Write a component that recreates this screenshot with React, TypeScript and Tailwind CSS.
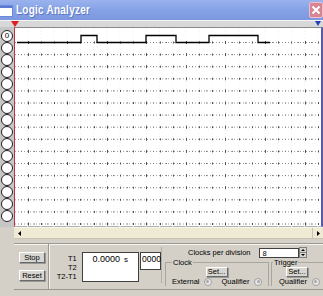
import React from "react";

const ROWS = 16;

function Plot() {
  const W = 306;
  const H = 199;
  const rowsY = Array.from({ length: ROWS }, (_, i) => 14 + i * 12.1);
  const ticks: number[] = [];
  for (let x = 12.5; x < W; x += 13.2) ticks.push(x);
  const minor: number[] = [];
  for (let x = 5.9; x < W; x += 13.2) minor.push(x);
  return (
    <svg width={W} height={H} viewBox={`0 0 ${W} ${H}`} className="block">
      {ticks.map((x, i) => (
        <line key={"v" + i} x1={x} y1={0} x2={x} y2={H} stroke="#f0f0f0" strokeWidth={1} strokeDasharray="1 2" />
      ))}
      {rowsY.map((y, r) => (
        <g key={r}>
          <line x1={0} y1={y + 0.5} x2={W} y2={y + 0.5} stroke="#9a9a9a" strokeWidth={1} strokeDasharray="1 2" />
          {ticks.map((x, i) => (
            <rect key={i} x={Math.round(x)} y={i % 3 === 0 ? y - 1 : y - 0.5} width={1} height={i % 3 === 0 ? 3 : 2} fill="#505050" />
          ))}
          {minor.map((x, i) => (
            <rect key={"m" + i} x={Math.round(x)} y={y} width={1} height={1} fill="#707070" />
          ))}
        </g>
      ))}
      <polyline
        points="2,14.5 66,14.5 66,7.5 82,7.5 82,14.5 131,14.5 131,7.5 161,7.5 161,14.5 194,14.5 194,7.5 243,7.5 243,14.5 255,14.5"
        fill="none"
        stroke="#000"
        strokeWidth={1.3}
      />
    </svg>
  );
}

function Btn({ children, className = "" }: { children: React.ReactNode; className?: string }) {
  return (
    <div
      className={
        "flex items-center justify-center bg-[#d8d6d0] border border-t-white border-l-white border-b-[#6a6a6a] border-r-[#6a6a6a] shadow-[1px_1px_0_#9a9a9a] text-[7.5px] leading-none text-black " +
        className
      }
    >
      {children}
    </div>
  );
}

function Radio() {
  return (
    <div className="w-[8px] h-[8px] rounded-full border border-[#a0a0a0] bg-[#e8e8e8] flex items-center justify-center">
      <div className="w-[3px] h-[3px] rounded-full bg-[#a8a8a8]" />
    </div>
  );
}

export default function App() {
  return (
    <div className="w-[323px] h-[296px] bg-[#d4d0c8] flex flex-col overflow-hidden font-['Liberation_Sans',Arial,sans-serif] text-black">
      {/* Title bar */}
      <div className="h-[20px] flex items-center bg-gradient-to-b from-[#9ab3ee] via-[#86a2e6] to-[#7c97de] shrink-0">
        <div className="w-[12px] h-[10px] bg-white border-t-[2px] border-[#5c7ad0] ml-0 mt-[1px] shadow-[0_0_0_1px_#6c88d8]" />
        <div className="ml-[4px] inline-block origin-left scale-x-[0.8] text-white font-bold text-[12.5px] leading-none tracking-[0.3px] [text-shadow:1px_1px_0_#5a74c0] whitespace-nowrap">
          Logic Analyzer
        </div>
        <div className="ml-auto mr-0 w-[14px] h-[16px] bg-[#d88494] border border-[#f0c0c8] rounded-[2px] flex items-center justify-center">
          <svg width="10" height="10" viewBox="0 0 10 10">
            <path d="M1.5 1.5 L8.5 8.5 M8.5 1.5 L1.5 8.5" stroke="#fff" strokeWidth={2} />
          </svg>
        </div>
      </div>
      {/* marker strip */}
      <div className="h-[7px] bg-[#d8d8d8] border-t border-[#f4f4f4] flex items-end shrink-0">
        <svg width="8" height="6" viewBox="0 0 8 6" className="ml-[11px]">
          <path d="M0 0 H8 L4 6 Z" fill="#e02020" />
        </svg>
        <svg width="6" height="5" viewBox="0 0 6 5" className="ml-auto mr-[2px] mb-[1px]">
          <path d="M0 0 H6 L3 5 Z" fill="#2040c0" />
        </svg>
      </div>
      {/* main area */}
      <div className="h-[200px] flex shrink-0">
        <div className="w-[15px] bg-[#c6c6c6] flex flex-col pt-[3px] pl-[1px]">
          {Array.from({ length: ROWS }, (_, i) => (
            <div
              key={i}
              className="w-[12px] h-[12px] rounded-full border border-[#202020] bg-white flex items-center justify-center text-[8px] leading-none"
            >
              {i === 0 ? "0" : ""}
            </div>
          ))}
        </div>
        <div className="flex-1 bg-white border-t border-t-[#8a8a8a] border-l border-l-[#c03040] border-r-2 border-r-[#5a5aa8] border-b border-b-[#b0b0b0]">
          <Plot />
        </div>
      </div>
      {/* scrollbar */}
      <div className="h-[12px] flex shrink-0">
        <div className="w-[14px] bg-[#d4d0c8]" />
        <div className="flex-1 flex bg-[#eeead4] border-t border-[#f8f6ec] border-b border-b-[#c8c4b0]">
          <div className="w-[11px] flex items-center justify-center">
            <svg width="3" height="5" viewBox="0 0 3 5">
              <path d="M3 0 V5 L0 2.5 Z" fill="#000" />
            </svg>
          </div>
          <div className="flex-1" />
          <div className="w-[11px] flex items-center justify-center border-l border-[#c8c4b0]">
            <svg width="3" height="5" viewBox="0 0 3 5">
              <path d="M0 0 V5 L3 2.5 Z" fill="#000" />
            </svg>
          </div>
        </div>
      </div>
      {/* bottom panel */}
      <div className="h-[4px] shrink-0" />
      <div className="ml-[14px] h-[47px] flex border-t border-[#9a9890] shadow-[inset_0_1px_0_#f4f4f0] border-b border-b-[#9a9890] shrink-0">
        {/* stop/reset */}
        <div className="w-[35px] flex flex-col pt-[8px] pl-[5px] gap-[7px] border-r border-[#9a9890] shadow-[1px_0_0_#f4f4f0]">
          <Btn className="w-[26px] h-[11px]">Stop</Btn>
          <Btn className="w-[26px] h-[11px]">Reset</Btn>
        </div>
        {/* times */}
        <div className="w-[112px] flex pt-[8px]">
          <div className="w-[24px] ml-[4px] flex flex-col items-end text-[7.5px] leading-[9px] pt-[2px]">
            <span>T1</span>
            <span>T2</span>
            <span>T2-T1</span>
          </div>
          <div className="ml-[5px] w-[58px] h-[30px] bg-white border border-[#404040] flex justify-center pt-[2px] text-[9px] leading-none">
            <span>0.0000</span>
            <span className="ml-[4px] text-[8px] mt-[1px]">s</span>
          </div>
          <div className="ml-[1px] w-[21px] h-[18px] bg-white border border-[#404040] text-[8.5px] leading-none pt-[2px] pl-[1px]">
            0000
          </div>
        </div>
        {/* clocks */}
        <div className="flex-1 flex flex-col border-l border-[#b0aea8] mt-[3px] mb-[6px]">
          <div className="flex items-center h-[11px]">
            <span className="ml-[26px] text-[7.5px] leading-none">Clocks per division</span>
            <div className="ml-[8px] w-[40px] h-[10px] bg-white border border-[#404040] text-[7.5px] leading-none pl-[3px] pt-[1px]">8</div>
            <div className="w-[8px] h-[11px] flex flex-col">
              <div className="flex-1 bg-[#d8d6d0] border border-[#808080] flex items-center justify-center">
                <svg width="4" height="2" viewBox="0 0 4 2"><path d="M0 2 H4 L2 0 Z" fill="#000" /></svg>
              </div>
              <div className="flex-1 bg-[#d8d6d0] border border-[#808080] border-t-0 flex items-center justify-center">
                <svg width="4" height="2" viewBox="0 0 4 2"><path d="M0 0 H4 L2 2 Z" fill="#000" /></svg>
              </div>
            </div>
          </div>
          <div className="flex flex-1 mt-[1px]">
            <fieldset className="ml-[3px] w-[104px] border border-b-0 border-[#a8a6a0] px-[6px] pt-0 min-w-0">
              <legend className="ml-[0px] px-[1px] text-[7.5px] leading-none">Clock</legend>
              <div className="flex justify-center mt-[0px]">
                <Btn className="w-[22px] h-[10px] ml-[-1px]">Set...</Btn>
              </div>
              <div className="flex items-center mt-[1px] text-[7.5px] leading-none">
                <span className="ml-[0px]">External</span>
                <div className="ml-[4px]"><Radio /></div>
                <span className="ml-[10px]">Qualifier</span>
                <div className="ml-[5px]"><Radio /></div>
              </div>
            </fieldset>
            <fieldset className="ml-[2px] flex-1 border border-b-0 border-r-0 border-[#a8a6a0] pl-[7px] pt-0 min-w-0">
              <legend className="ml-[-6px] px-[1px] text-[7.5px] leading-none">Trigger</legend>
              <div className="flex mt-[0px] pl-[7px]">
                <Btn className="w-[22px] h-[10px]">Set...</Btn>
              </div>
              <div className="flex items-center mt-[1px] text-[7.5px] leading-none">
                <span>Qualifier</span>
                <div className="ml-[5px]"><Radio /></div>
              </div>
            </fieldset>
          </div>
        </div>
      </div>
    </div>
  );
}
